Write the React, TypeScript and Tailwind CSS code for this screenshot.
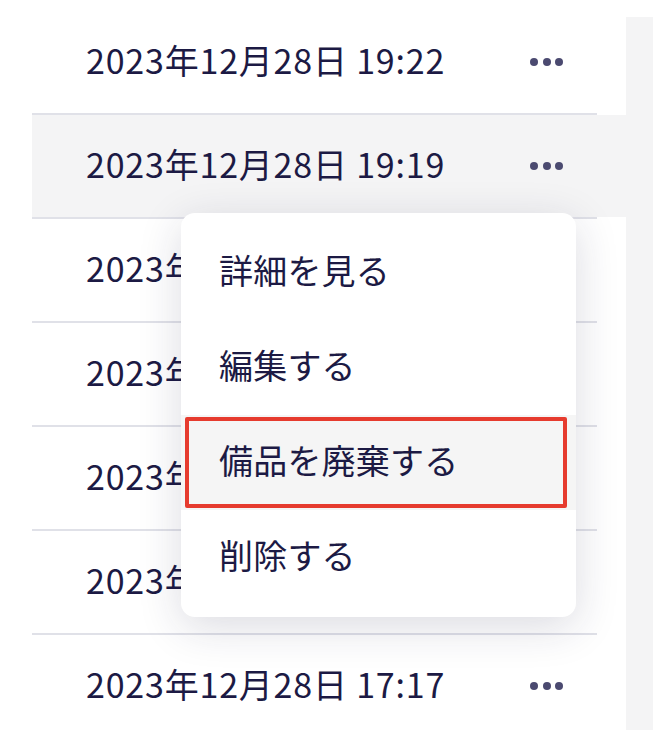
import React from "react";

const rows = [
  { t: "2023年12月28日 19:22", active: false },
  { t: "2023年12月28日 19:19", active: true },
  { t: "2023年12月28日 19:02", active: false },
  { t: "2023年12月28日 18:41", active: false },
  { t: "2023年12月28日 18:10", active: false },
  { t: "2023年12月28日 17:45", active: false },
  { t: "2023年12月28日 17:17", active: false },
];

function Dots() {
  return (
    <div className="flex items-center gap-[4.5px]">
      <span className="block w-[8px] h-[8px] rounded-full bg-[#4b4a70]" />
      <span className="block w-[8px] h-[8px] rounded-full bg-[#4b4a70]" />
      <span className="block w-[8px] h-[8px] rounded-full bg-[#4b4a70]" />
    </div>
  );
}

const items = ["詳細を見る", "編集する", "備品を廃棄する", "削除する"];

export default function App() {
  return (
    <div
      className="relative w-[672px] h-[742px] bg-white overflow-hidden flex items-start text-[#1c1a44]"
      style={{ fontFamily: '"Noto Sans CJK JP", "Noto Sans", sans-serif' }}
    >
      <div className="w-[626px] pl-[32px] pt-[11px] flex flex-col">
        {rows.map((r, i) => (
          <React.Fragment key={i}>
            {i > 0 && <div className="h-[2px] w-[565px] bg-[#e0e1e8]" />}
            <div
              className={
                "h-[102px] flex items-center justify-between pl-[54px] pr-[63px] " +
                (r.active ? "bg-[#f4f4f5]" : "bg-white")
              }
            >
              <span className="text-[34px] leading-none tracking-[0.8px] pb-[4px]">{r.t}</span>
              <Dots />
            </div>
          </React.Fragment>
        ))}
      </div>
      <div className="w-[27px] mt-[17px] h-[713px] bg-[#f4f4f5]" />

      <div className="absolute left-[181px] top-[213px] w-[395px] py-[12px] bg-white rounded-[14px] shadow-[0_10px_44px_rgba(30,30,70,0.16)] flex flex-col">
        {items.map((it, i) => (
          <div
            key={i}
            className={
              "relative h-[95px] flex items-center pl-[38px] pb-[5px] text-[34px] leading-none tracking-[0.2px] " +
              (i === 2 ? "bg-[#f5f5f5]" : "")
            }
          >
            {it}
            {i === 2 && (
              <div className="absolute left-[4px] right-[9px] top-[2px] bottom-[2px] border-[4.5px] border-[#e63b2e] rounded-[2px]" />
            )}
          </div>
        ))}
      </div>
    </div>
  );
}
